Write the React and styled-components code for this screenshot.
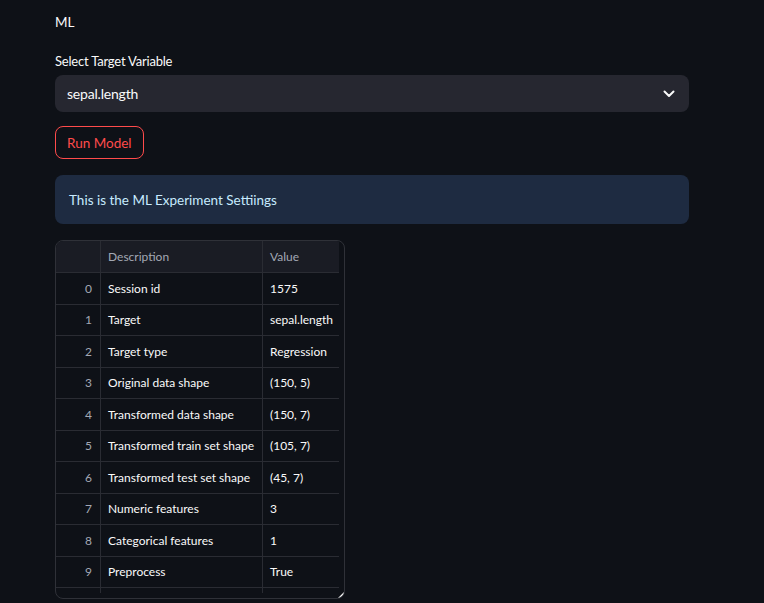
import React from 'react';
import styled, {createGlobalStyle} from 'styled-components';

const GlobalStyle = createGlobalStyle`
  html, body {
    margin: 0;
    padding: 0;
    background: #0e1117;
  }
  body {
    font-family: Lato, "Noto Sans", sans-serif;
    color: #fafafa;
  }
`;

const Page = styled.div`
  width: 634px;
  padding: 12px 0 0 55px;
  display: flex;
  flex-direction: column;
`;

const Heading = styled.div`
  font-size: 13.5px;
  line-height: 20px;
  height: 20px;
  margin-bottom: 19px;
`;

const Label = styled.label`
  font-size: 13px;
  letter-spacing: -0.2px;
  line-height: 20px;
  height: 20px;
  margin-bottom: 4px;
`;

const Select = styled.div`
  height: 37px;
  box-sizing: border-box;
  background: #262730;
  border-radius: 8px;
  display: flex;
  align-items: center;
  justify-content: space-between;
  padding: 0 14px 0 12px;
  font-size: 14px;
  letter-spacing: -0.2px;
`;

const RunButton = styled.button`
  margin-top: 14px;
  align-self: flex-start;
  height: 33px;
  padding: 0 11px;
  background: transparent;
  border: 1px solid #ff4b4b;
  border-radius: 8px;
  color: #ff4b4b;
  font-family: inherit;
  font-size: 13.5px;
`;

const Info = styled.div`
  margin-top: 16px;
  height: 49px;
  box-sizing: border-box;
  background: #1e2b41;
  border-radius: 8px;
  color: #c7ebff;
  font-size: 13.5px;
  display: flex;
  align-items: center;
  padding: 0 14px;
`;

const TableFrame = styled.div`
  position: relative;
  margin-top: 16px;
  width: 290px;
  height: 359px;
  box-sizing: border-box;
  border: 1px solid #2f3138;
  border-radius: 8px;
  overflow: hidden;
`;

const Grid = styled.div`
  width: 283px;
  height: 352px;
  overflow: hidden;
`;

const Row = styled.div`
  display: grid;
  grid-template-columns: 45px 162px 76px;
  height: ${props => (props.header ? 32 : 31.5)}px;
  background: ${props => (props.header ? '#1a1c24' : 'transparent')};
  border-bottom: 1px solid #2a2c33;
  box-sizing: border-box;
  font-size: 12px;
`;

const Cell = styled.div`
  display: flex;
  align-items: center;
  padding: 0 ${props => (props.index ? 8 : 7)}px;
  justify-content: ${props => (props.index ? 'flex-end' : 'flex-start')};
  color: ${props => (props.index || props.header ? '#a3a8b4' : '#fafafa')};
  border-right: ${props => (props.last ? 'none' : '1px solid #2a2c33')};
  white-space: nowrap;
  overflow: hidden;
`;

const Handle = styled.div`
  position: absolute;
  right: 0;
  bottom: 0;
  width: 0;
  height: 0;
  border-left: 6px solid transparent;
  border-bottom: 6px solid #fafafa;
`;

const rows = [
  ['Session id', '1575'],
  ['Target', 'sepal.length'],
  ['Target type', 'Regression'],
  ['Original data shape', '(150, 5)'],
  ['Transformed data shape', '(150, 7)'],
  ['Transformed train set shape', '(105, 7)'],
  ['Transformed test set shape', '(45, 7)'],
  ['Numeric features', '3'],
  ['Categorical features', '1'],
  ['Preprocess', 'True'],
  ['', ''],
];

const Chevron = () => (
  <svg width="12" height="8" viewBox="0 0 12 8" fill="none">
    <path d="M1.5 1.5L6 6L10.5 1.5" stroke="#fafafa" strokeWidth="2" strokeLinecap="round" strokeLinejoin="round" />
  </svg>
);

export default function App() {
  return (
    <Page>
      <GlobalStyle />
      <Heading>ML</Heading>
      <Label>Select Target Variable</Label>
      <Select>
        <span>sepal.length</span>
        <Chevron />
      </Select>
      <RunButton>Run Model</RunButton>
      <Info>This is the ML Experiment Settiings</Info>
      <TableFrame>
        <Grid>
          <Row header>
            <Cell header />
            <Cell header>Description</Cell>
            <Cell header last>Value</Cell>
          </Row>
          {rows.map((item, index) => {
            const [desc, value] = item;
            return (
              <Row key={'row ' + index}>
                <Cell index>{index < 10 ? index : ''}</Cell>
                <Cell>{desc}</Cell>
                <Cell last>{value}</Cell>
              </Row>
            );
          })}
        </Grid>
        <Handle />
      </TableFrame>
    </Page>
  );
}
